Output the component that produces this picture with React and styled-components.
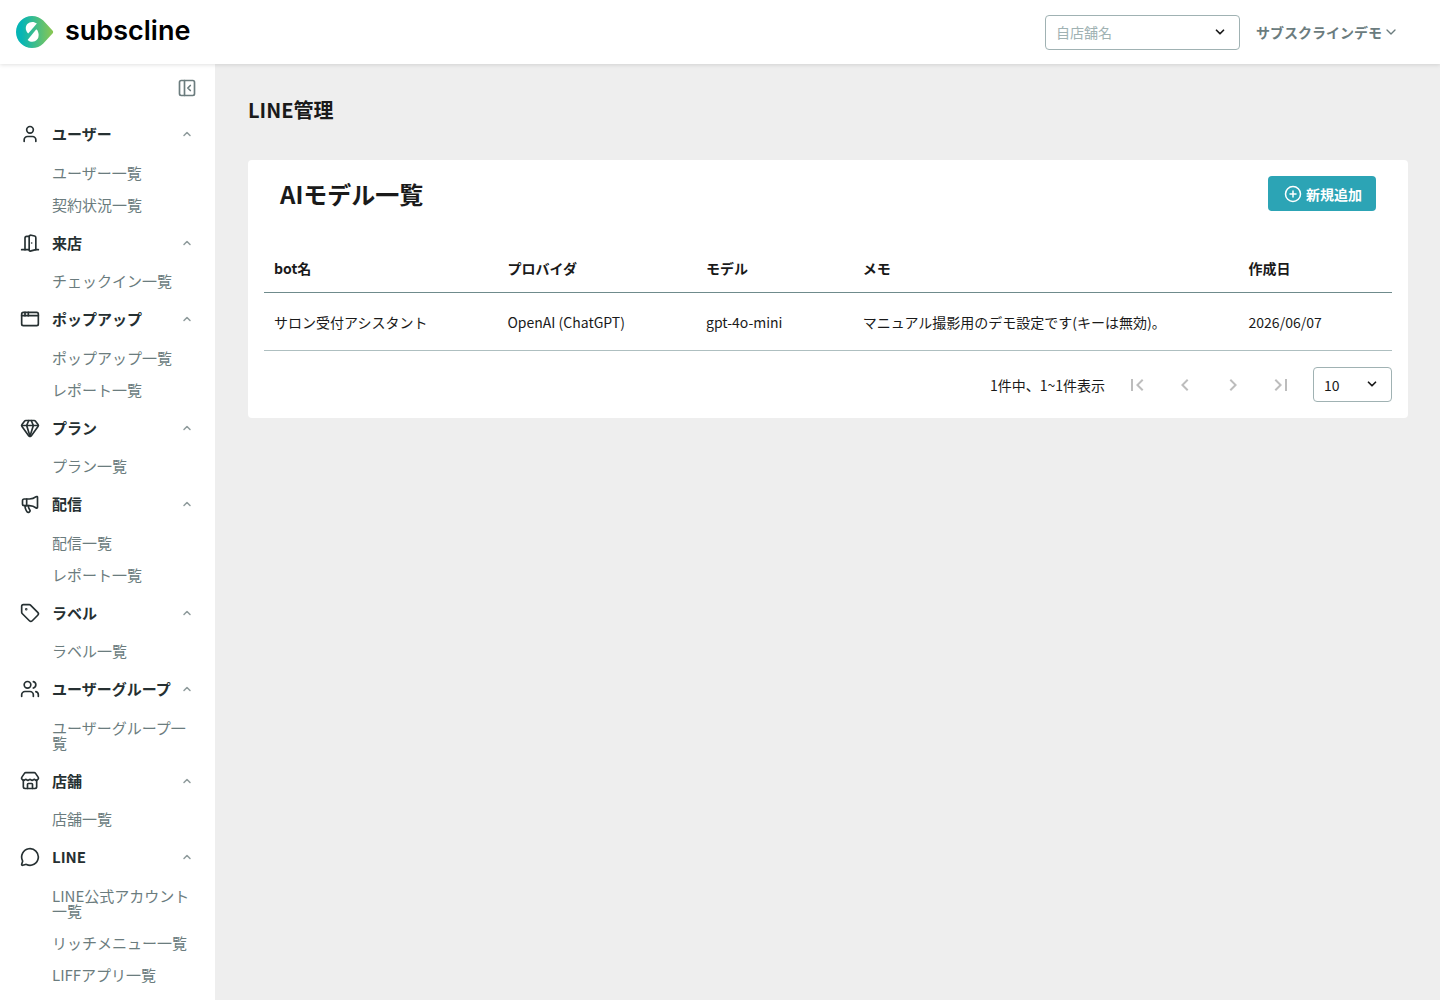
import React, { useState } from 'react';
import styled, { createGlobalStyle } from 'styled-components'
import {
  AppWindow, ChevronDown, ChevronUp, CirclePlus, DoorOpen, Gem, Megaphone,
  MessageCircle, PanelLeftClose, Store, Tag, User, Users
} from 'lucide-react'
import { MdChevronLeft, MdChevronRight, MdFirstPage, MdLastPage } from 'react-icons/md'

const GlobalStyle = createGlobalStyle`
* {
  box-sizing: border-box;
}
body {
  margin: 0;
  background-color: #eeeeee;
  color: #1a1a1a;
  font-family: "Noto Sans CJK JP", sans-serif;
  font-size: 14px;
}
button, select {
  font-family: inherit;
  font-size: 14px;
}
button {
  border: none;
  background: none;
  padding: 0;
  color: inherit;
  cursor: pointer;
}
 `
const Page = styled.div`
display: flex;
flex-direction: column;
height: 100vh;
 `
const Header = styled.header`
display: flex;
flex-shrink: 0;
align-items: center;
justify-content: space-between;
height: 64px;
padding: 0 41px 0 16px;
background-color: white;
box-shadow: 0 1px 4px rgba(0, 0, 0, 0.12);
z-index: 1;
 `
const LogoLink = styled.a`
display: flex;
align-items: center;
gap: 11px;
color: black;
text-decoration: none;
 `
const LogoText = styled.span`
padding-bottom: 2px;
font-family: Inter, sans-serif;
font-size: 27px;
font-weight: 600;
line-height: 32px;
 `
const HeaderRight = styled.div`
display: flex;
align-items: center;
gap: 16px;
 `
const AccountButton = styled.button`
display: flex;
align-items: center;
gap: 1px;
color: #6b7c7e;
font-weight: 700;
 `
const SelectBox = styled.div`
display: flex;
position: relative;
width: ${props => props.$width};
svg {
  position: absolute;
  top: 10px;
  right: 13px;
  pointer-events: none;
}
 `
const Select = styled.select`
appearance: none;
width: 100%;
height: 35px;
padding: 0 32px 0 10px;
border: 1px solid #a0b2b3;
border-radius: 4px;
background-color: white;
color: ${props => props.$empty ? "#a0b2b3" : "#1a1a1a"};
 `
const Body = styled.div`
display: flex;
flex: 1;
min-height: 0;
 `
const Sidebar = styled.nav`
flex-shrink: 0;
width: 215px;
overflow: hidden;
background-color: white;
 `
const SidebarTop = styled.div`
display: flex;
justify-content: flex-end;
padding: 14px 18px 14px 0;
color: #6b7c7e;
button {
  display: flex;
}
 `
const GroupButton = styled.button`
display: flex;
align-items: center;
width: 100%;
padding: 11px 22px 11px 20px;
color: #263032;
font-size: 15px;
font-weight: 700;
line-height: 1.5;
text-align: left;
 `
const GroupName = styled.span`
flex: 1;
margin-left: 12px;
white-space: nowrap;
 `
const GroupArrow = styled(ChevronUp)`
color: #8f9b9c;
 `
const SubList = styled.ul`
margin: 0;
padding: 0;
list-style: none;
 `
const SubLink = styled.a`
display: block;
padding: 8px 16px 9px 52px;
color: #6b7c7e;
font-size: 15px;
line-height: 15px;
text-decoration: none;
 `
const Main = styled.main`
flex: 1;
min-width: 0;
padding: 32px 32px 32px 33px;
overflow: auto;
 `
const PageTitle = styled.h1`
margin: 0 0 36px;
font-size: 20px;
font-weight: 700;
line-height: 28px;
 `
const Card = styled.section`
padding: 16px;
border-radius: 4px;
background-color: white;
 `
const CardHeader = styled.div`
display: flex;
align-items: center;
justify-content: space-between;
padding: 0 16px;
margin-bottom: 33px;
 `
const CardTitle = styled.h2`
margin: 0;
font-size: 24px;
font-weight: 700;
line-height: 35px;
 `
const AddButton = styled.button`
display: flex;
align-items: center;
gap: 4px;
height: 35px;
padding: 0 14px 0 16px;
border-radius: 4px;
background-color: #2ca4b5;
color: white;
font-weight: 700;
 `
const Table = styled.table`
width: 100%;
border-spacing: 0;
table-layout: fixed;
 `
const Th = styled.th`
width: ${props => props.$width};
height: 49px;
padding: 0 10px;
border-bottom: 1px solid #6f8b8c;
text-align: left;
font-weight: 700;
 `
const Td = styled.td`
height: 58px;
padding: 0 10px;
border-bottom: 1px solid #aebfc0;
 `
const Pagination = styled.div`
display: flex;
align-items: center;
justify-content: flex-end;
margin-top: 16px;
 `
const PageCount = styled.span`
margin-right: 8px;
 `
const PageButton = styled.button`
display: flex;
justify-content: center;
width: 48px;
color: #bdbdbd;
 `
const PageSize = styled.div`
margin-left: 8px;
 `

const menu = [
  { name: "ユーザー", Icon: User, items: ["ユーザー一覧", "契約状況一覧"] },
  { name: "来店", Icon: DoorOpen, items: ["チェックイン一覧"] },
  { name: "ポップアップ", Icon: AppWindow, items: ["ポップアップ一覧", "レポート一覧"] },
  { name: "プラン", Icon: Gem, items: ["プラン一覧"] },
  { name: "配信", Icon: Megaphone, items: ["配信一覧", "レポート一覧"] },
  { name: "ラベル", Icon: Tag, items: ["ラベル一覧"] },
  { name: "ユーザーグループ", Icon: Users, items: ["ユーザーグループ一覧"] },
  { name: "店舗", Icon: Store, items: ["店舗一覧"] },
  { name: "LINE", Icon: MessageCircle, items: ["LINE公式アカウント一覧", "リッチメニュー一覧", "LIFFアプリ一覧"] },
]

const columns = [
  { key: "bot", label: "bot名", width: "20.7%" },
  { key: "provider", label: "プロバイダ", width: "17.6%" },
  { key: "model", label: "モデル", width: "13.9%" },
  { key: "memo", label: "メモ", width: "34.2%" },
  { key: "created", label: "作成日", width: "13.6%" },
]

const rows = [
  {
    bot: "サロン受付アシスタント",
    provider: "OpenAI (ChatGPT)",
    model: "gpt-4o-mini",
    memo: "マニュアル撮影用のデモ設定です(キーは無効)。",
    created: "2026/06/07"
  },
]

function LogoMark() {
  return (
    <svg width="38" height="32" viewBox="0 0 38 32" aria-hidden="true">
      <defs>
        <linearGradient id="logo" x1="0" y1="0" x2="1" y2="0">
          <stop offset="0.15" stopColor="#06b5b5" />
          <stop offset="1" stopColor="#8bc751" />
        </linearGradient>
      </defs>
      <path fill="url(#logo)" d="M16 0C7.200 0 0 7.200 0 16s7.200 16 16 16c4.500 0 8.300-1.700 11.300-4.600l9.200-9.800c.9-.9.900-2.300 0-3.200l-9.200-9.800C24.300 1.700 20.500 0 16 0Z" />
      <path fill="white" d="M12.200 17.400C9.300 15.200 9 10.700 11.300 8.100 13.900 5.300 18 5.200 20.900 7.600Z" />
      <path fill="white" d="M20.300 13.200C23.100 15.800 23.400 20.700 21.100 23.600 18.500 26.600 14.400 26.500 11.600 23.900Z" />
    </svg>
  )
}

function MenuGroup({ group }) {
  const [open, setOpen] = useState(true)
  const { Icon } = group

  return (
    <div>
      <GroupButton aria-expanded={open} onClick={() => setOpen(!open)}>
        <Icon size={20} strokeWidth={2} />
        <GroupName>{group.name}</GroupName>
        <GroupArrow size={12} strokeWidth={3} />
      </GroupButton>
      {open && (
        <SubList>
          {group.items.map((item) => (
            <li key={item}><SubLink href="#">{item}</SubLink></li>
          ))}
        </SubList>
      )}
    </div>
  )
}

function App() {
  const [shop, setShop] = useState("")
  const [pageSize, setPageSize] = useState("10")

  return (
    <Page>
      <GlobalStyle />
      <Header>
        <LogoLink href="#">
          <LogoMark />
          <LogoText>subscline</LogoText>
        </LogoLink>
        <HeaderRight>
          <SelectBox $width="195px">
            <Select aria-label="自店舗名" $empty={shop === ""} value={shop} onChange={(e) => setShop(e.target.value)}>
              <option value="">自店舗名</option>
            </Select>
            <ChevronDown size={14} strokeWidth={3} />
          </SelectBox>
          <AccountButton>
            サブスクラインデモ
            <ChevronDown size={16} strokeWidth={2} />
          </AccountButton>
        </HeaderRight>
      </Header>
      <Body>
        <Sidebar>
          <SidebarTop>
            <button aria-label="メニューを閉じる"><PanelLeftClose size={20} /></button>
          </SidebarTop>
          {menu.map((group) => (
            <MenuGroup key={group.name} group={group} />
          ))}
        </Sidebar>
        <Main>
          <PageTitle>LINE管理</PageTitle>
          <Card>
            <CardHeader>
              <CardTitle>AIモデル一覧</CardTitle>
              <AddButton>
                <CirclePlus size={18} />
                新規追加
              </AddButton>
            </CardHeader>
            <Table>
              <thead>
                <tr>
                  {columns.map((column) => (
                    <Th key={column.key} $width={column.width}>{column.label}</Th>
                  ))}
                </tr>
              </thead>
              <tbody>
                {rows.map((row) => (
                  <tr key={row.bot}>
                    {columns.map((column) => (
                      <Td key={column.key}>{row[column.key]}</Td>
                    ))}
                  </tr>
                ))}
              </tbody>
            </Table>
            <Pagination>
              <PageCount>1件中、1~1件表示</PageCount>
              <PageButton disabled aria-label="最初のページ"><MdFirstPage size={24} /></PageButton>
              <PageButton disabled aria-label="前のページ"><MdChevronLeft size={24} /></PageButton>
              <PageButton disabled aria-label="次のページ"><MdChevronRight size={24} /></PageButton>
              <PageButton disabled aria-label="最後のページ"><MdLastPage size={24} /></PageButton>
              <PageSize>
                <SelectBox $width="79px">
                  <Select aria-label="表示件数" value={pageSize} onChange={(e) => setPageSize(e.target.value)}>
                    <option value="10">10</option>
                    <option value="20">20</option>
                    <option value="50">50</option>
                  </Select>
                  <ChevronDown size={14} strokeWidth={3} />
                </SelectBox>
              </PageSize>
            </Pagination>
          </Card>
        </Main>
      </Body>
    </Page>
  )
}


export default App;
